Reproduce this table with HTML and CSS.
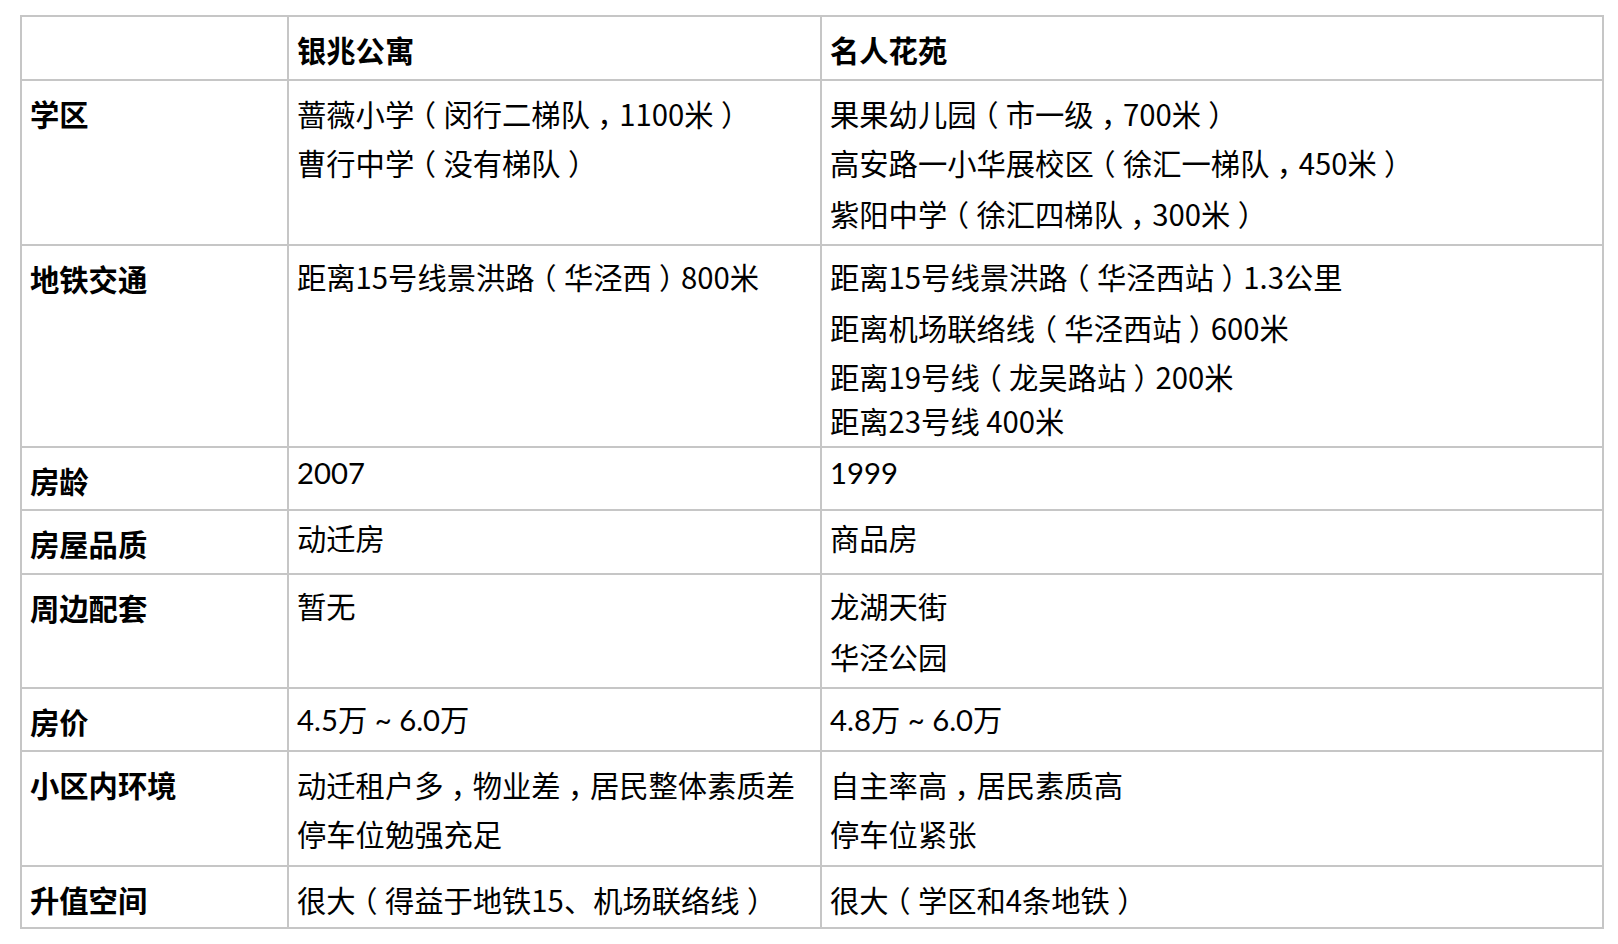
FILE: index.html
```html
<!DOCTYPE html>
<html lang="zh-CN">
<head>
<meta charset="utf-8">
<title>银兆公寓 vs 名人花苑</title>
<link rel="stylesheet" href="styles.css">
</head>
<body>
<table class="cmp">
  <colgroup>
    <col class="c-label">
    <col class="c-a">
    <col class="c-b">
  </colgroup>
  <tr class="r-head">
    <td></td>
    <td class="b">银兆公寓</td>
    <td class="b">名人花苑</td>
  </tr>
  <tr class="r-school">
    <td class="b">学区</td>
    <td><div class="ln">蔷薇小学<span class="pu">（</span>闵行二梯队<span class="pu">，</span>1100米<span class="pu">）</span></div><div class="ln">曹行中学<span class="pu">（</span>没有梯队<span class="pu">）</span></div></td>
    <td><div class="ln">果果幼儿园<span class="pu">（</span>市一级<span class="pu">，</span>700米<span class="pu">）</span></div><div class="ln">高安路一小华展校区<span class="pu">（</span>徐汇一梯队<span class="pu">，</span>450米<span class="pu">）</span></div><div class="ln more">紫阳中学<span class="pu">（</span>徐汇四梯队<span class="pu">，</span>300米<span class="pu">）</span></div></td>
  </tr>
  <tr class="r-metro">
    <td class="b">地铁交通</td>
    <td class="up2"><div class="ln">距离15号线景洪路<span class="pu">（</span>华泾西<span class="pu">）</span>800米</div></td>
    <td class="up2"><div class="ln">距离15号线景洪路<span class="pu">（</span>华泾西站<span class="pu">）</span>1.3公里</div><div class="ln more">距离机场联络线<span class="pu">（</span>华泾西站<span class="pu">）</span>600米</div><div class="ln">距离19号线<span class="pu">（</span>龙吴路站<span class="pu">）</span>200米</div><div class="ln less">距离23号线 400米</div></td>
  </tr>
  <tr class="r-age">
    <td class="b">房龄</td>
    <td class="up lat"><div class="ln">2007</div></td>
    <td class="up lat"><div class="ln">1999</div></td>
  </tr>
  <tr class="r-quality">
    <td class="b">房屋品质</td>
    <td class="up6"><div class="ln">动迁房</div></td>
    <td class="up6"><div class="ln">商品房</div></td>
  </tr>
  <tr class="r-around">
    <td class="b">周边配套</td>
    <td class="up2"><div class="ln">暂无</div></td>
    <td class="up2"><div class="ln">龙湖天街</div><div class="ln more">华泾公园</div></td>
  </tr>
  <tr class="r-price">
    <td class="b">房价</td>
    <td class="up2 lat"><div class="ln">4.5万 ~ 6.0万</div></td>
    <td class="up2 lat"><div class="ln">4.8万 ~ 6.0万</div></td>
  </tr>
  <tr class="r-env">
    <td class="b">小区内环境</td>
    <td><div class="ln">动迁租户多<span class="pu">，</span>物业差<span class="pu">，</span>居民整体素质差</div><div class="ln">停车位勉强充足</div></td>
    <td><div class="ln">自主率高<span class="pu">，</span>居民素质高</div><div class="ln">停车位紧张</div></td>
  </tr>
  <tr class="r-value">
    <td class="b">升值空间</td>
    <td><div class="ln">很大<span class="pu">（</span>得益于地铁15、机场联络线<span class="pu">）</span></div></td>
    <td><div class="ln">很大<span class="pu">（</span>学区和4条地铁<span class="pu">）</span></div></td>
  </tr>
</table>
</body>
</html>
```
FILE: styles.css
```css
html, body {
  margin: 0;
  padding: 0;
  background: #ffffff;
}
body {
  padding: 15px 0 0 20px;
  font-family: "Noto Sans CJK SC", "Noto Sans", sans-serif;
  color: #000000;
}
.cmp {
  border-collapse: collapse;
  table-layout: fixed;
  width: 1582px;
  font-size: 29.3px;
}
.c-label { width: 267px; }
.c-a { width: 533px; }
.c-b { width: 782px; }
.cmp td {
  border: 2px solid #c6c6c6;
  vertical-align: top;
  padding: 8px 8px 0 8px;
  line-height: 49px;
  white-space: nowrap;
}
.cmp td.b {
  font-weight: 700;
}
.ln { line-height: 49px; }
.ln.more { margin-top: 2px; }
.ln.less { margin-top: -5px; }
.pu {
  font-feature-settings: "halt" 1;
  margin: 0 0.25em;
}
.cmp td.lat {
  font-family: "Lato", "Noto Sans CJK SC", sans-serif;
}
.cmp td.up { padding-top: 0; }
.cmp td.up2 { padding-top: 6px; }
.cmp td.up6 { padding-top: 2px; }
.r-head { height: 64px; }
.r-school { height: 165px; }
.r-metro { height: 202px; }
.r-age { height: 63px; }
.r-quality { height: 64px; }
.r-around { height: 114px; }
.r-price { height: 63px; }
.r-env { height: 115px; }
.r-value { height: 62px; }
```
